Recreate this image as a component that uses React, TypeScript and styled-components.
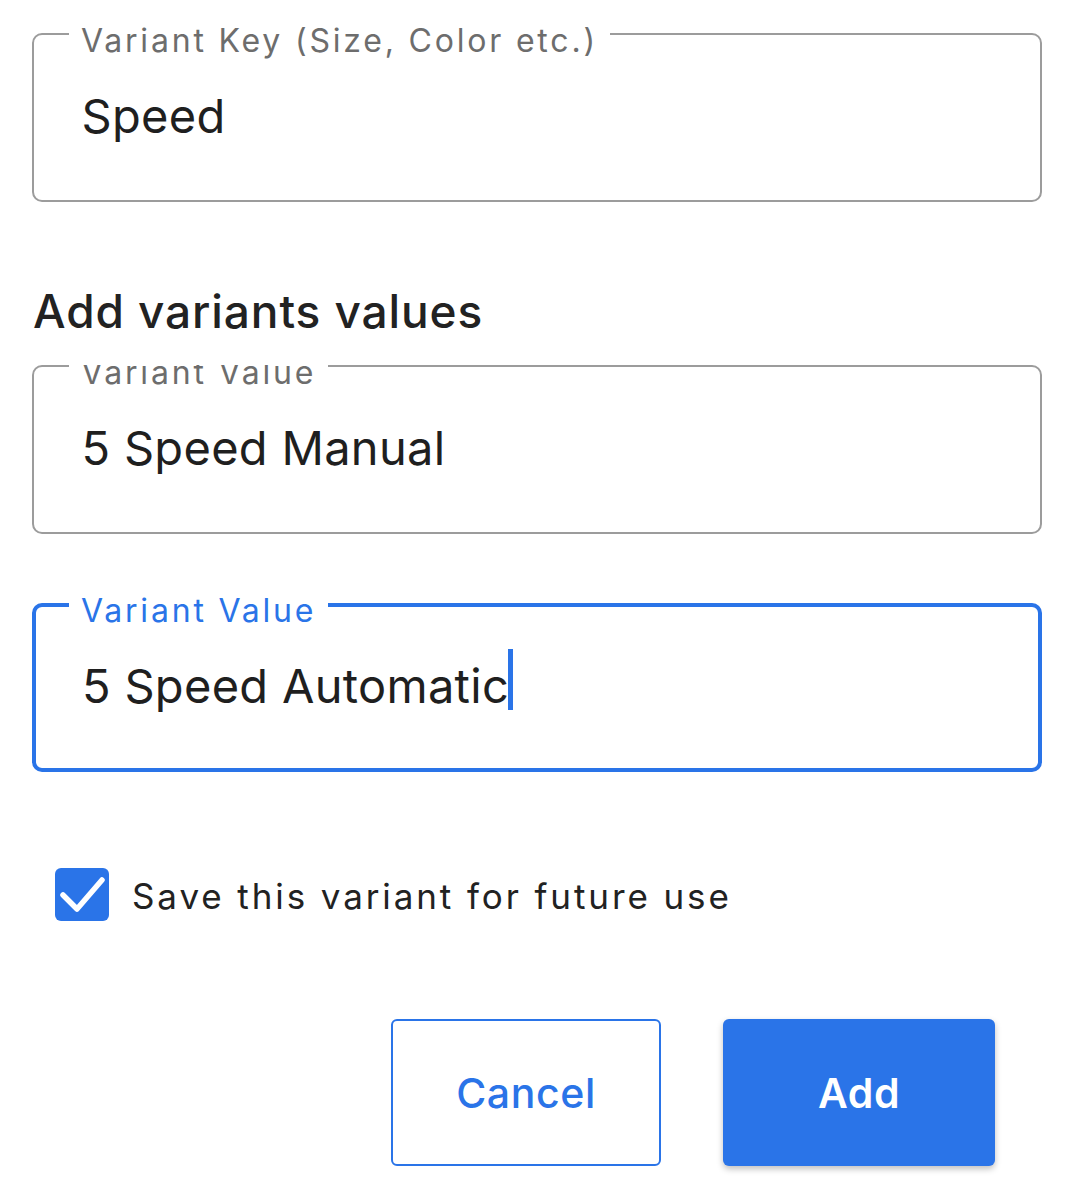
import React from 'react';
import styled, { createGlobalStyle } from 'styled-components';

const blue = '#2a74e8';

const GlobalStyle = createGlobalStyle`
  html, body {
    margin: 0;
    padding: 0;
    background: #fff;
  }
  body {
    font-family: Inter, Roboto, "Liberation Sans", sans-serif;
    color: #202124;
  }
`;

const Page = styled.div`
  width: 1079px;
  height: 1187px;
  box-sizing: border-box;
  padding: 33px 37px 0 32px;
  display: flex;
  flex-direction: column;
  overflow: hidden;
`;

const FieldWrap = styled.div<{ $clip?: boolean }>`
  position: relative;
  overflow: ${p => (p.$clip ? 'hidden' : 'visible')};
`;

const FieldBox = styled.div<{ $focused?: boolean }>`
  box-sizing: border-box;
  height: 169px;
  border: ${p => (p.$focused ? `4px solid ${blue}` : '2.5px solid #9c9c9c')};
  border-radius: 10px;
  display: flex;
  align-items: center;
  padding-left: ${p => (p.$focused ? '46px' : '47.5px')};
  padding-bottom: 4px;
  font-size: 47px;
  line-height: 1;
  letter-spacing: 0.3px;
  color: #1f1f1f;
`;

const FieldLabel = styled.span<{ $focused?: boolean }>`
  position: absolute;
  left: 37px;
  top: -8px;
  padding: 0 12px;
  background: #fff;
  font-size: 32px;
  line-height: 1;
  letter-spacing: 2.8px;
  color: ${p => (p.$focused ? blue : '#6d6d6d')};
  white-space: nowrap;
`;

const Caret = styled.span`
  display: inline-block;
  width: 5px;
  height: 61px;
  margin-left: -1px;
  background: ${blue};
  vertical-align: middle;
  position: relative;
  top: -6px;
`;

const Heading = styled.h2`
  margin: 82px 0 26px 1px;
  font-size: 46px;
  line-height: 55px;
  font-weight: 500;
  letter-spacing: 0.9px;
  color: #222;
`;

const Spacer = styled.div<{ $h: number }>`
  height: ${p => p.$h}px;
  flex: none;
`;

const CheckRow = styled.label`
  display: flex;
  align-items: center;
  gap: 23px;
  margin-left: 23px;
  font-size: 35px;
  color: #222;
`;

const CheckBox = styled.span`
  width: 54px;
  height: 53px;
  border-radius: 6px;
  background: ${blue};
  display: flex;
  align-items: center;
  justify-content: center;
  flex: none;
`;

const CheckText = styled.span`
  position: relative;
  top: 1px;
  letter-spacing: 2.9px;
`;

const ButtonRow = styled.div`
  display: flex;
  justify-content: flex-end;
  gap: 62px;
  padding-right: 47px;
`;

const Button = styled.button<{ $primary?: boolean }>`
  box-sizing: border-box;
  width: ${p => (p.$primary ? '272px' : '270px')};
  height: 147px;
  border-radius: 6px;
  border: ${p => (p.$primary ? 'none' : `2.5px solid ${blue}`)};
  background: ${p => (p.$primary ? blue : '#fff')};
  color: ${p => (p.$primary ? '#fff' : blue)};
  box-shadow: ${p => (p.$primary ? '0 3px 6px rgba(0,0,0,0.25)' : 'none')};
  font-family: Inter, Roboto, "Liberation Sans", sans-serif;
  font-size: 41px;
  font-weight: ${p => (p.$primary ? 600 : 500)};
  letter-spacing: 0.6px;
  cursor: pointer;
`;

type FieldProps = {
  label: string;
  value: string;
  focused?: boolean;
  clip?: boolean;
};

const OutlinedField: React.FC<FieldProps> = ({ label, value, focused, clip }) => (
  <FieldWrap $clip={clip}>
    <FieldBox $focused={focused}>
      <span>{value}</span>
      {focused && <Caret />}
    </FieldBox>
    <FieldLabel $focused={focused}>{label}</FieldLabel>
  </FieldWrap>
);

const App: React.FC = () => {
  return (
    <>
      <GlobalStyle />
      <Page>
        <OutlinedField label="Variant Key (Size, Color etc.)" value="Speed" />
        <Heading>Add variants values</Heading>
        <OutlinedField label="Variant Value" value="5 Speed Manual" clip />
        <Spacer $h={69} />
        <OutlinedField label="Variant Value" value="5 Speed Automatic" focused />
        <Spacer $h={96} />
        <CheckRow>
          <CheckBox>
            <svg width="54" height="53" viewBox="0 0 54 53">
              <path
                d="M8 27 L22 41 L47 12"
                fill="none"
                stroke="#fff"
                strokeWidth="5.5"
                strokeLinecap="round"
                strokeLinejoin="round"
              />
            </svg>
          </CheckBox>
          <CheckText>Save this variant for future use</CheckText>
        </CheckRow>
        <Spacer $h={98} />
        <ButtonRow>
          <Button>Cancel</Button>
          <Button $primary>Add</Button>
        </ButtonRow>
      </Page>
    </>
  );
};

export default App;
